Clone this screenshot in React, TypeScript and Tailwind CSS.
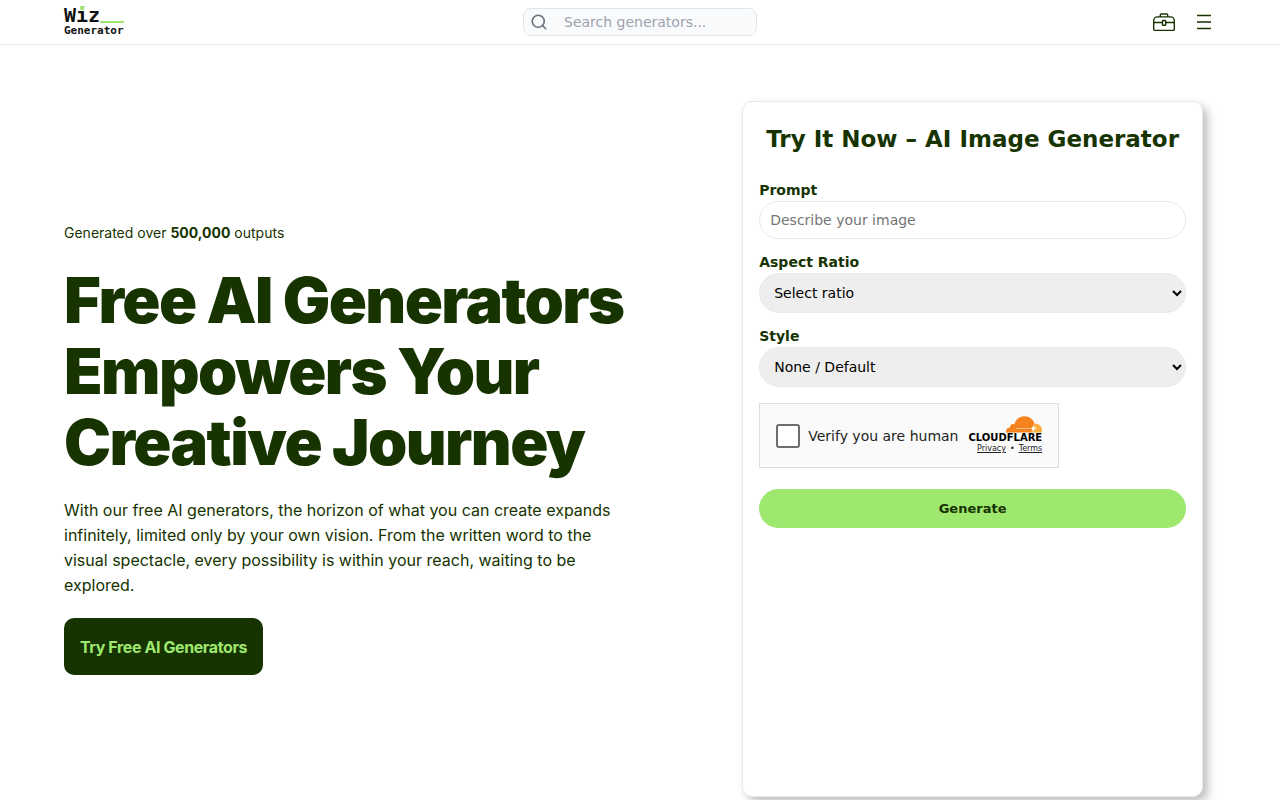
import { useState } from "react"
import { Search } from "lucide-react"

const ratios = ["Select ratio", "1:1", "16:9", "9:16", "4:3"]
const styles = ["None / Default", "Photorealistic", "Anime", "Watercolor"]

function Logo() {
    return (
        <a
            href="/"
            aria-label="Wiz Generator"
            className="relative flex flex-col font-['DejaVu_Sans_Mono',monospace] font-bold text-[#111]"
        >
            <span className="flex items-end">
                <span className="text-[20px] leading-[18px]">Wiz</span>
                <span className="mb-px h-[2px] flex-1 bg-[#9fe870]" />
            </span>
            <span className="text-[11px] leading-[14px]">Generator</span>
            <span className="absolute top-0 left-4 h-1 w-1 rounded-[1px] bg-[#9fe870]" />
        </a>
    )
}

function ToolboxIcon() {
    return (
        <svg
            width="24"
            height="24"
            viewBox="0 0 24 24"
            fill="none"
            stroke="currentColor"
            strokeWidth="1.4"
        >
            <path d="M8.3 6.9V5a1 1 0 0 1 1-1h5.400a1 1 0 0 1 1 1v1.900" />
            <path d="M1.700 19.400V10.500c0-2 1.600-3.600 3.600-3.600h13.400c2 0 3.600 1.600 3.600 3.600v8.900a1 1 0 0 1-1 1H2.700a1 1 0 0 1-1-1z" />
            <path d="M1.700 12.500h8.800M13.700 12.500h8.600" />
            <rect x="10.500" y="10.500" width="3.200" height="4.800" rx="0.600" />
        </svg>
    )
}

function MenuIcon() {
    return (
        <svg
            width="24"
            height="24"
            viewBox="0 0 24 24"
            stroke="currentColor"
            strokeWidth="1.7"
        >
            <path d="M5 5.500h14M5 12h14M5 18.500h14" />
        </svg>
    )
}

function CloudflareMark() {
    return (
        <svg width="36" height="17" viewBox="0 0 36 17">
            <path
                fill="#f6821f"
                d="M0 16.600c-.3-3 1-5 4.200-5.200-.5-2.600 1.900-4.300 4.200-3C9.600 3.500 13.700.3 18.500.3c5 0 8.900 3.200 10 7.700l-3 8.600z"
            />
            <path
                fill="#fbad41"
                d="M28.500 7.400c4.200-.2 7.500 3 7.500 6.600 0 1-.1 1.800-.3 2.600H24.800z"
            />
            <path
                stroke="#fbd3a8"
                strokeWidth="0.7"
                fill="none"
                d="M10 12.500h14.500c1.200 0 1.700-.5 2-1.400"
            />
            <path fill="#fff" d="m27.500 8.500 1 3 2.500.8-2.500 1-1.600 3-.5-3-1.800-.8 2-1z" />
        </svg>
    )
}

function Header() {
    return (
        <header className="border-b border-[#e5e7e9]">
            <div className="mx-auto grid h-11 max-w-[1280px] grid-cols-[1fr_234px_1fr] items-center px-16">
                <div className="flex">
                    <Logo />
                </div>
                <label className="flex h-7 items-center gap-4 rounded-lg border border-[#e1e5e8] bg-[#f9fafb] pl-1.5">
                    <Search
                        className="h-[18px] w-[18px] shrink-0 text-[#6b7280]"
                        strokeWidth={2.2}
                    />
                    <input
                        type="search"
                        aria-label="Search generators"
                        placeholder="Search generators..."
                        className="w-full min-w-0 bg-transparent text-sm outline-none placeholder:text-[#9ca3af]"
                    />
                </label>
                <div className="flex items-center justify-end gap-4">
                    <button type="button" aria-label="Toolbox">
                        <ToolboxIcon />
                    </button>
                    <button type="button" aria-label="Menu">
                        <MenuIcon />
                    </button>
                </div>
            </div>
        </header>
    )
}

function SelectField({
    id,
    label,
    options,
}: {
    id: string
    label: string
    options: string[]
}) {
    return (
        <div className="flex flex-col">
            <label htmlFor={id} className="text-sm leading-[22px] font-bold">
                {label}
            </label>
            <select
                id={id}
                className="h-10 w-full rounded-full border border-[#e9ebe8] bg-[#eeeeee] px-[10px] text-sm text-black"
            >
                {options.map((option) => (
                    <option key={option}>{option}</option>
                ))}
            </select>
        </div>
    )
}

function HumanCheck() {
    const [checked, setChecked] = useState(false)
    return (
        <div className="flex h-[65px] w-[300px] items-center border border-[#dedede] bg-[#fafafa] px-4">
            <input
                id="human"
                type="checkbox"
                checked={checked}
                onChange={(e) => setChecked(e.target.checked)}
                className="h-6 w-6 shrink-0 appearance-none rounded-[3px] border-2 border-[#6d6d6d] bg-white checked:bg-[#6d6d6d]"
            />
            <label
                htmlFor="human"
                className="ml-2 text-sm whitespace-nowrap text-[#232323]"
            >
                Verify you are human
            </label>
            <div className="ml-auto flex flex-col items-end text-[#232323]">
                <CloudflareMark />
                <span className="text-[10px] leading-[10px] font-bold text-black">
                    CLOUDFLARE
                </span>
                <div className="flex gap-1 text-[8px] leading-3">
                    <a href="#privacy" className="underline">
                        Privacy
                    </a>
                    <span>•</span>
                    <a href="#terms" className="underline">
                        Terms
                    </a>
                </div>
            </div>
        </div>
    )
}

function GeneratorForm() {
    return (
        <form
            onSubmit={(e) => e.preventDefault()}
            className="mr-[13px] flex min-h-[696px] w-2/5 flex-col rounded-[10px] border border-[#e8eae7] bg-white px-4 pt-5 shadow-[5px_5px_10px_rgba(0,0,0,0.25)]"
        >
            <h2 className="text-center text-[23px] leading-[34px] font-bold whitespace-nowrap">
                Try It Now – AI Image Generator
            </h2>
            <div className="mt-[23px] flex flex-col gap-3">
                <div className="flex flex-col">
                    <label
                        htmlFor="prompt"
                        className="text-sm leading-[22px] font-bold"
                    >
                        Prompt
                    </label>
                    <input
                        id="prompt"
                        type="text"
                        placeholder="Describe your image"
                        className="h-[38px] w-full rounded-full border border-[#e8eae7] px-[10px] text-sm placeholder:text-[#757575]"
                    />
                </div>
                <SelectField id="ratio" label="Aspect Ratio" options={ratios} />
                <SelectField id="style" label="Style" options={styles} />
            </div>
            <div className="mt-4">
                <HumanCheck />
            </div>
            <button
                type="submit"
                className="mt-[21px] h-[39px] rounded-full bg-[#9fe870] text-[13px] font-bold"
            >
                Generate
            </button>
        </form>
    )
}

export default function App() {
    return (
        <div className="min-h-screen overflow-x-hidden bg-white font-['DejaVu_Sans',sans-serif] text-[#163300]">
            <Header />
            <main className="mx-auto flex max-w-[1280px] items-center justify-between px-16 pt-14">
                <section className="w-1/2 font-[Inter,sans-serif]">
                    <p className="text-sm">
                        Generated over <strong>500,000</strong> outputs
                    </p>
                    <h1 className="mt-[22px] text-[63px] leading-[71px] font-black tracking-tight whitespace-nowrap">
                        Free AI Generators
                        <br />
                        Empowers Your
                        <br />
                        Creative Journey
                    </h1>
                    <p className="mt-5 max-w-[560px] text-base leading-[25px]">
                        With our free AI generators, the horizon of what you can
                        create expands infinitely, limited only by your own
                        vision. From the written word to the visual spectacle,
                        every possibility is within your reach, waiting to be
                        explored.
                    </p>
                    <a
                        href="#generators"
                        className="mt-5 inline-flex h-[57px] items-center rounded-[10px] bg-[#163300] px-4 text-base font-bold tracking-tight text-[#9fe870]"
                    >
                        Try Free AI Generators
                    </a>
                </section>
                <GeneratorForm />
            </main>
        </div>
    )
}
